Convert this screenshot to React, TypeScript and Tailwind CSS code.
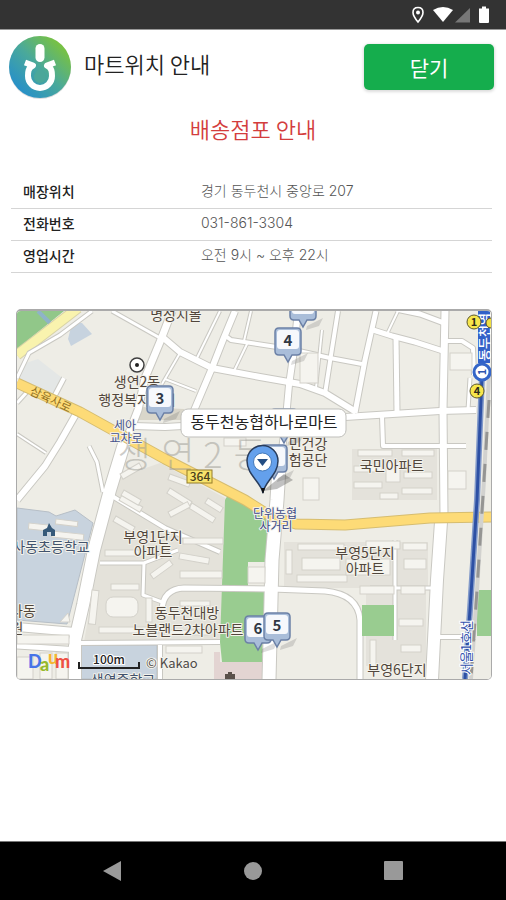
import React from "react";

type Road = { d: string; w: number };
type Block = [x: number, y: number, w: number, h: number, angle?: number];

const roads: Road[] = [
  { d: "M17 378L29 353L60 335L92 311", w: 3 },
  { d: "M17 403L27 392", w: 3 },
  { d: "M64 378L54 397", w: 4 },
  { d: "M76 414L60 442L45 466L17 500", w: 6 },
  { d: "M17 434L46 453", w: 2 },
  { d: "M89 446L97 462L103 492", w: 3 },
  { d: "M112 311L160 338", w: 3 },
  { d: "M172 311L160 342L145 378L138 410L124 446", w: 7 },
  { d: "M124 444L110 490L94 550L83 605L75 640L75 680", w: 12 },
  { d: "M134 426L165 427L200 425L260 422L345 417L440 411L476 410", w: 6 },
  { d: "M160 335L180 352L212 368L260 377L300 384L325 393L356 412", w: 6 },
  { d: "M235 311L223 340L212 368L190 420", w: 6 },
  { d: "M220 311L197 358", w: 2 },
  { d: "M180 353L162 384", w: 2 },
  { d: "M165 379L196 391", w: 2 },
  { d: "M248 342L234 371", w: 2 },
  { d: "M251 311L244 341", w: 2 },
  { d: "M223 334L231 340L290 349L330 358L362 364", w: 4 },
  { d: "M298 311L294 350L289 385L286 418L282 450", w: 6 },
  { d: "M338 311L331 355L325 394", w: 4 },
  { d: "M322 330L316 388", w: 2 },
  { d: "M376 311L365 360L355 413", w: 5 },
  { d: "M373 330L392 336L415 342L443 351", w: 5 },
  { d: "M398 311L387 334", w: 2 },
  { d: "M396 338L397 412", w: 5 },
  { d: "M396 309L420 314L444 323", w: 5 },
  { d: "M445 311L443 410L444 515", w: 7 },
  { d: "M441 522L437 580L432 680", w: 12 },
  { d: "M444 341L462 341L473 348L474 375", w: 4 },
  { d: "M470 378L468 410", w: 3 },
  { d: "M382 416L383 446L466 446", w: 4 },
  { d: "M280 450L277 500L272 560L269 680", w: 13 },
  { d: "M162 610Q163 589 184 588L272 589L325 591Q358 594 360 620L360 680", w: 5 },
  { d: "M17 627L75 632", w: 8 },
  { d: "M17 646L80 650", w: 5 },
  { d: "M80 643L220 642", w: 4 },
  { d: "M437 637L476 637", w: 4 },
  { d: "M100 563L144 563L178 550", w: 3 },
  { d: "M112 496L165 528L220 552", w: 4 },
  { d: "M144 563L143 595L162 602", w: 3 },
  { d: "M160 645L160 680", w: 4 },
  { d: "M370 588L435 588", w: 3 },
  { d: "M395 540L395 640", w: 3 },
];

const blocks: Block[] = [
  [122, 495, 24, 6, 30], [116, 516, 22, 6, 30], [170, 488, 26, 6, 32], [192, 503, 28, 6, 32],
  [168, 512, 22, 6, -28], [105, 550, 34, 6], [183, 538, 40, 6], [111, 584, 28, 6],
  [92, 590, 7, 34, 6], [146, 598, 6, 24], [99, 627, 60, 6], [150, 574, 24, 6, -36],
  [180, 571, 42, 7], [166, 646, 36, 7], [180, 553, 30, 6, 10], [180, 601, 30, 5],
  [164, 630, 44, 5], [208, 498, 18, 6, 32], [170, 474, 22, 6, 20], [120, 474, 22, 6, -30],
  [124, 490, 20, 6, 30], [298, 544, 46, 6], [366, 541, 34, 8], [403, 543, 24, 7],
  [286, 550, 6, 24], [297, 575, 50, 7], [360, 586, 34, 8], [401, 586, 24, 8],
  [399, 619, 24, 7], [401, 645, 20, 7], [370, 640, 6, 30], [302, 558, 38, 12],
  [346, 559, 44, 16], [404, 559, 22, 10], [358, 450, 34, 6], [402, 450, 32, 6],
  [354, 466, 28, 6], [404, 472, 28, 6], [354, 482, 28, 6], [402, 488, 30, 6],
  [380, 493, 18, 6], [386, 462, 14, 20], [29, 523, 20, 6, 6], [56, 519, 22, 5, 7],
  [52, 531, 32, 6, 6], [450, 353, 22, 17], [448, 471, 18, 18], [303, 478, 16, 22],
  [300, 353, 18, 30], [318, 414, 20, 12], [224, 438, 22, 8], [248, 567, 17, 16],
  [17, 635, 52, 9], [17, 657, 16, 22], [40, 653, 12, 26], [56, 653, 12, 26],
];

const sans = "'Noto Sans CJK KR', 'Noto Sans', sans-serif";

function PlaceLabel({ x, y, children, size = 14, color = "#51463c" }: {
  x: number; y: number; children: string; size?: number; color?: string;
}) {
  return (
    <text x={x} y={y} textAnchor="middle" fontSize={size} fill={color}
      stroke="#f3f2eb" strokeWidth="2" strokeLinejoin="round" paintOrder="stroke">
      {children}
    </text>
  );
}

function NumberPin({ x, y, label }: { x: number; y: number; label?: string }) {
  return (
    <g transform={`translate(${x} ${y})`}>
      <path d="M4 18L20 10L16 18L3 22Z" fill="#555" opacity=".2" />
      <path d="M-9 -15H9Q13 -15 13 -11V8Q13 12 9 12H4L0 19L-4 12H-9Q-13 12 -13 8V-11Q-13 -15 -9 -15Z" fill="#a9bdd9" stroke="#6b80a6" strokeWidth="1.5" />
      <rect x="-11" y="-13" width="22" height="19" rx="3" fill="#f6f8fc" />
      {label && <text y="3" textAnchor="middle" fontSize="15" fontWeight="700" fill="#303846">{label}</text>}
    </g>
  );
}

function StoreMap() {
  return (
    <svg viewBox="17 311 474 368" className="block w-full" role="img" aria-label="동두천농협하나로마트 지도" fontFamily={sans}>
      <rect x="17" y="311" width="474" height="368" fill="#eeede6" />
      <path d="M17 311H64L17 349Z" fill="#91c789" />
      <path d="M38 311L50 323" stroke="#8fb3c8" strokeWidth="4" />
      <path d="M17 355L78 308" stroke="#d8d3a6" strokeWidth="11" />
      <path d="M17 355L78 308" stroke="#f9f3ae" strokeWidth="9" />
      <path d="M20 365L38 359L66 381L52 395L18 378Z" fill="#e4e7e6" />
      <path d="M72 323L82 323L92 334L71 346L68 339Z" fill="#c7d3df" />
      <path d="M17 508L49 512L56 516L75 510L93 523L67 624L17 620Z" fill="#c8d3de" stroke="#b6bec6" />
      <path d="M80 645H157V679H80Z" fill="#c8d3de" stroke="#b6bec6" />
      <path d="M112 480L160 463L229 500L222 642H84Z" fill="#e4e2da" />
      <path d="M284 542H428V588H284ZM366 588H426V666H366ZM352 449H437V500H352Z" fill="#e4e2db" />
      <path d="M142 407L184 409L187 420L138 420Z" fill="#d9d6ca" />
      <path d="M220 642L225 500L229 493L268 516L267 562H248V586H265L262 662H222Z" fill="#99cc90" />
      <path d="M220 662H262V679H214V652H220Z" fill="#e3d4d2" />
      <g fill="none" stroke="#c9c8c2" strokeLinejoin="round">
        {roads.map((road) => <path key={road.d} d={road.d} strokeWidth={road.w + 2} />)}
      </g>
      <g fill="none" stroke="#fff" strokeLinejoin="round">
        {roads.map((road) => <path key={road.d} d={road.d} strokeWidth={road.w} />)}
      </g>
      <g fill="#f5f4ef" stroke="#d3d1ca">
        {blocks.map(([x, y, w, h, angle = 0], i) => (
          <rect key={i} x={x} y={y} width={w} height={h} transform={`rotate(${angle} ${x} ${y})`} />
        ))}
        <rect x="106" y="597" width="32" height="20" rx="7" />
        <path d="M60 622L68 613L70 622Z" />
      </g>
      <path d="M362 605H394V636H362ZM477 590H491V636H477Z" fill="#99cc90" />
      <g fill="none" strokeLinejoin="round">
        <path d="M17 383L80 412L165 459L245 500L272 517L296 524L345 525L430 518L495 517" stroke="#d6bd70" strokeWidth="11" />
        <path d="M17 383L80 412L165 459L245 500L272 517L296 524L345 525L430 518L495 517" stroke="#fddb77" strokeWidth="9" />
        <path d="M489 375L484 480L477 590L471 679" stroke="#d2d2cf" strokeWidth="4" />
        <path d="M489 400L484 480L477 590L471 679" stroke="#959593" strokeWidth="3" strokeDasharray="18 14" />
        <path d="M482 375L477 500L470 610L465 679" stroke="#8199c9" strokeWidth="6" />
        <path d="M482 375L477 500L470 610L465 679" stroke="#2d50a4" strokeWidth="3" />
        <path d="M484 311V363" stroke="#3261c9" strokeWidth="12" />
      </g>
      <text y="468" textAnchor="middle" fontSize="36" fill="#9b9b94" opacity=".5" fontWeight="300">
        <tspan x="134">생</tspan><tspan x="178">연</tspan><tspan x="213">2</tspan><tspan x="250">동</tspan>
      </text>

      <PlaceLabel x={176} y={320}>명성시몰</PlaceLabel>
      <circle cx="137" cy="365" r="7" fill="#fff" stroke="#3f3f3f" strokeWidth="1.5" />
      <circle cx="137" cy="365" r="2" fill="#222" />
      <PlaceLabel x={137} y={387}>생연2동</PlaceLabel>
      <PlaceLabel x={137} y={405}>행정복지센터</PlaceLabel>
      <PlaceLabel x={125} y={430} size={12} color="#46528c">세아</PlaceLabel>
      <PlaceLabel x={126} y={443} size={12} color="#46528c">교차로</PlaceLabel>
      <text transform="translate(29 394) rotate(25)" fontSize="12" fill="#927023">삼육사로</text>
      <PlaceLabel x={308} y={449}>민건강</PlaceLabel>
      <PlaceLabel x={308} y={465}>험공단</PlaceLabel>
      <PlaceLabel x={392} y={471}>국민아파트</PlaceLabel>
      <PlaceLabel x={275} y={518} size={12} color="#3d4a87">단위농협</PlaceLabel>
      <PlaceLabel x={276} y={531} size={12} color="#3d4a87">사거리</PlaceLabel>
      <PlaceLabel x={153} y={542}>부영1단지</PlaceLabel>
      <PlaceLabel x={153} y={557}>아파트</PlaceLabel>
      <PlaceLabel x={365} y={558}>부영5단지</PlaceLabel>
      <PlaceLabel x={365} y={574}>아파트</PlaceLabel>
      <PlaceLabel x={187} y={618}>동두천대방</PlaceLabel>
      <PlaceLabel x={188} y={635}>노블랜드2차아파트</PlaceLabel>
      <PlaceLabel x={397} y={675}>부영6단지</PlaceLabel>
      <PlaceLabel x={23} y={616}>사동</PlaceLabel>
      <PlaceLabel x={17} y={633}>원</PlaceLabel>
      <path d="M43 536V530L47 528L49 523L52 528L55 530V536H51V532H47V536Z" fill="#355979" />
      <PlaceLabel x={51} y={552} color="#42536d">사동초등학교</PlaceLabel>
      <PlaceLabel x={123} y={685} color="#42536d">생연중학교</PlaceLabel>
      <path d="M228 674V672H232V674H235V679H225V674Z" fill="#5a504a" />
      <rect x="187" y="470" width="25" height="13" fill="#f7e36b" stroke="#947d2b" />
      <text x="200" y="481" textAnchor="middle" fontSize="12" fontWeight="500" fill="#473d1b">364</text>

      <text transform="translate(489 361) rotate(-90)" fontSize="13" fontWeight="500" fill="#fff">동두천역</text>
      <text transform="translate(471 675) rotate(-90)" fontSize="13" fill="#3251ad" stroke="#fff" strokeWidth="2" paintOrder="stroke">서울1호선</text>
      <circle cx="482" cy="372" r="8" fill="#fff" stroke="#3566c8" strokeWidth="3" />
      <text transform="translate(486 372) rotate(-90)" textAnchor="middle" fontSize="11" fontWeight="700" fill="#2e55af">1</text>
      <circle cx="491" cy="323" r="5" fill="#f0df43" stroke="#554d26" />
      {[[474, 322, "1"], [477, 391, "4"]].map(([x, y, n]) => (
        <g key={n}>
          <circle cx={x} cy={y} r="7" fill="#f7e64b" stroke="#5c572d" />
          <text x={x} y={Number(y) + 4} textAnchor="middle" fontSize="11" fontWeight="700" fill="#2f2c1b">{n}</text>
        </g>
      ))}
      <NumberPin x={303} y={308} />
      <NumberPin x={288} y={343} label="4" />
      <NumberPin x={160} y={401} label="3" />
      <NumberPin x={284} y={424} />
      <NumberPin x={274} y={460} />
      <NumberPin x={258} y={631} label="6" />
      <NumberPin x={277} y={628} label="5" />
      <path d="M263 491L284 474L293 480L277 489Z" fill="#333" opacity=".3" />
      <path d="M263 493C261 482 247 475 247 461A15.500 15.500 0 0 1 278 461C278 475 264 482 263 493Z" fill="#64a0ec" stroke="#293d5d" strokeWidth="1.5" />
      <circle cx="262.500" cy="462" r="9" fill="#fff" stroke="#4479b9" />
      <path d="M257 459H268L262.500 466Z" fill="#234d83" />
      <path d="M261 488L263 494L265 488Z" fill="#111" />
      <rect x="181" y="409" width="165" height="28" rx="7" fill="#fff" stroke="#bfbfbb" />
      <text x="264" y="428" textAnchor="middle" fontSize="16" fill="#222">동두천농협하나로마트</text>

      <g fontFamily="Lato, sans-serif" fontWeight="900" fontSize="18">
        <text x="28" y="668" fill="#4774e8">D</text>
        <text x="48" y="664" fill="#f4b630">u</text>
        <text x="40" y="671" fill="#96b92c">a</text>
        <text x="55" y="668" fill="#ee5145">m</text>
      </g>
      <path d="M79 662V668H139V662" fill="none" stroke="#222" strokeWidth="2" />
      <text x="109" y="664" textAnchor="middle" fontSize="12" fontWeight="500" fill="#222" stroke="#fff" strokeWidth="2" paintOrder="stroke">100m</text>
      <text x="146" y="668" fontSize="13" fill="#4e4a47" stroke="#f2f1ec" strokeWidth="2" paintOrder="stroke">© Kakao</text>
    </svg>
  );
}

const details = [
  ["매장위치", "경기 동두천시 중앙로 207"],
  ["전화번호", "031-861-3304"],
  ["영업시간", "오전 9시 ~ 오후 22시"],
];

export default function App() {
  return (
    <div className="flex min-h-screen flex-col bg-white font-['Noto_Sans_CJK_KR','Noto_Sans',sans-serif]">
      <div className="flex h-[30px] shrink-0 items-center justify-end border-b border-[#999] bg-[#333]">
        <svg width="80" height="20" viewBox="410 5 80 20" className="mr-4" aria-hidden="true">
          <path d="M418 7.500C414.500 7.500 413 10 413 12.500C413 16 418 22 418 22S423 16 423 12.500C423 10 421.500 7.500 418 7.500Z" fill="none" stroke="#fff" strokeWidth="1.600" />
          <circle cx="418" cy="12.500" r="2" fill="#fff" />
          <path d="M433 10Q443 4 453 10L443 22Z" fill="#fff" />
          <path d="M455 22.500L470 8V22.500Z" fill="#777" />
          <path d="M479 8.500H482V6.500H486V8.500H489V22Q489 23 488 23H480Q479 23 479 22Z" fill="#fff" />
        </svg>
      </div>

      <header className="flex h-[74px] shrink-0 items-center pr-3 pl-2">
        <svg width="64" height="64" viewBox="0 0 64 64" role="img" aria-label="농협">
          <defs>
            <linearGradient id="brand" x1="0" y1="0.800" x2="0.800" y2="0">
              <stop offset="0" stopColor="#238dce" />
              <stop offset="0.500" stopColor="#4aa99a" />
              <stop offset="1" stopColor="#7fc536" />
            </linearGradient>
          </defs>
          <circle cx="32" cy="33" r="31" fill="#ddd" />
          <circle cx="32" cy="32" r="31" fill="url(#brand)" />
          <rect x="27.500" y="9" width="9" height="18" rx="4.500" fill="#fff" />
          <path d="M17 27.500L25 30.500C20 33 20 37 20 41A12 12 0 0 0 44 41C44 37 44 33 39 30.500L47 27.500" fill="none" stroke="#fff" strokeWidth="6" strokeLinecap="butt" strokeLinejoin="round" />
          <path d="M32 31C31 35 26 38 26 42A6 6 0 0 0 38 42C38 38 33 35 32 31Z" fill="#4ba79a" />
        </svg>
        <h1 className="mb-2 ml-3 text-[22px] leading-8 font-[350] text-[#222]">마트위치 안내</h1>
        <button type="button" className="ml-auto h-[46px] w-[130px] rounded-[5px] bg-[#15ad4d] text-[21px] leading-8 text-white shadow-[0_1px_3px_1px_#ddd]">닫기</button>
      </header>

      <main className="flex-1">
        <h2 className="mt-1 text-center text-[22px] leading-10 font-[350] text-[#d33d3d]">배송점포 안내</h2>
        <div className="mt-7 pr-[14px] pl-[11px]">
          <table className="w-full table-fixed text-left text-sm">
            <tbody>
              {details.map(([label, value]) => (
                <tr key={label} className="h-8 border-b border-[#d5d5d5]">
                  <th scope="row" className="w-[37%] px-3 pb-[2px] font-medium text-[#222]">{label}</th>
                  <td className="px-3 pb-[2px] font-['Inter','Noto_Sans_CJK_KR',sans-serif] font-light text-[#555]">{value}</td>
                </tr>
              ))}
            </tbody>
          </table>
        </div>
        <div className="mt-9 mr-[14px] mb-4 ml-4 overflow-hidden rounded-[5px] border border-t-2 border-[#aaa]">
          <StoreMap />
        </div>
      </main>

      <nav className="flex h-[59px] shrink-0 items-center justify-center gap-[93px] border-t border-[#777] bg-black">
        <button type="button" aria-label="뒤로" className="flex w-12 justify-center">
          <svg width="20" height="22" viewBox="0 0 20 22" fill="#999"><path d="M19 1V21L1 11Z" /></svg>
        </button>
        <button type="button" aria-label="홈" className="flex w-12 justify-center">
          <svg width="20" height="22" viewBox="0 0 20 22" fill="#999"><circle cx="10" cy="11" r="9" /></svg>
        </button>
        <button type="button" aria-label="최근 앱" className="flex w-12 justify-center">
          <svg width="20" height="22" viewBox="0 0 20 22" fill="#999"><rect y="1" width="19" height="19" rx="1" /></svg>
        </button>
      </nav>
    </div>
  );
}
